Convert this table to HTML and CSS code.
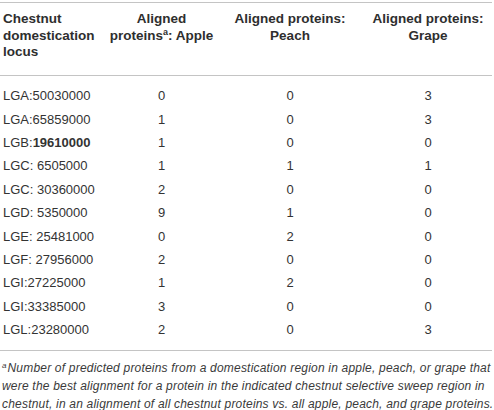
FILE: index.html
```html
<!DOCTYPE html>
<html>
<head>
<meta charset="utf-8">
<link rel="stylesheet" href="styles.css">
</head>
<body>
<div class="wrap">
  <table class="data">
    <colgroup>
      <col class="c1"><col class="c2"><col class="c3"><col class="c4">
    </colgroup>
    <thead>
      <tr>
        <th class="left">Chestnut<br>domestication<br>locus</th>
        <th>Aligned<br>proteins<sup>a</sup>: Apple</th>
        <th>Aligned proteins:<br>Peach</th>
        <th>Aligned proteins:<br>Grape</th>
      </tr>
    </thead>
    <tbody>
      <tr class="first"><td class="left">LGA:50030000</td><td>0</td><td>0</td><td>3</td></tr>
      <tr><td class="left">LGA:65859000</td><td>1</td><td>0</td><td>3</td></tr>
      <tr><td class="left">LGB:<b>19610000</b></td><td>1</td><td>0</td><td>0</td></tr>
      <tr><td class="left">LGC: 6505000</td><td>1</td><td>1</td><td>1</td></tr>
      <tr><td class="left">LGC: 30360000</td><td>2</td><td>0</td><td>0</td></tr>
      <tr><td class="left">LGD: 5350000</td><td>9</td><td>1</td><td>0</td></tr>
      <tr><td class="left">LGE: 25481000</td><td>0</td><td>2</td><td>0</td></tr>
      <tr><td class="left">LGF: 27956000</td><td>2</td><td>0</td><td>0</td></tr>
      <tr><td class="left">LGI:27225000</td><td>1</td><td>2</td><td>0</td></tr>
      <tr><td class="left">LGI:33385000</td><td>3</td><td>0</td><td>0</td></tr>
      <tr class="last"><td class="left">LGL:23280000</td><td>2</td><td>0</td><td>3</td></tr>
    </tbody>
  </table>
  <p class="note"><sup>a</sup>Number of predicted proteins from a domestication region in apple, peach, or grape that were the best alignment for a protein in the indicated chestnut selective sweep region in chestnut, in an alignment of all chestnut proteins vs. all apple, peach, and grape proteins.</p>
</div>
</body>
</html>
```

FILE: styles.css
```css
html, body {
  margin: 0;
  padding: 0;
  background: #ffffff;
}

.wrap {
  width: 492px;
  padding-top: 2px;
  font-family: "Liberation Sans", Arial, Helvetica, sans-serif;
  color: #333333;
}

.data {
  width: 492px;
  border-collapse: collapse;
  table-layout: fixed;
  font-size: 13px;
}

.c1 { width: 107px; }
.c2 { width: 109px; }
.c3 { width: 148px; }
.c4 { width: 128px; }

.data thead tr {
  border-top: 1px solid #c4c4c4;
  border-bottom: 1px solid #c4c4c4;
}

.data th {
  font-size: 13.5px;
  font-weight: bold;
  color: #2e2e2e;
  line-height: 16.7px;
  padding: 8px 0 14px;
  text-align: center;
  vertical-align: top;
}

.data th sup {
  font-size: 9px;
  line-height: 0;
  vertical-align: 5px;
}

.data td {
  padding: 0;
  line-height: 23.4px;
  height: 23.4px;
  text-align: center;
  white-space: nowrap;
}

.data th.left,
.data td.left {
  text-align: left;
  padding-left: 3px;
}

.data tr.first td { padding-top: 8px; }
.data tr.last td { padding-bottom: 8px; }

.data tbody tr.last {
  border-bottom: 1px solid #c4c4c4;
}

.note {
  width: 494px;
  margin: 8px 0 0;
  padding-left: 2px;
  box-sizing: border-box;
  font-size: 12px;
  letter-spacing: 0.2px;
  font-style: italic;
  line-height: 18px;
  color: #3a3a3a;
}

.note sup {
  font-size: 8px;
  line-height: 0;
  letter-spacing: 0;
  vertical-align: 4px;
  margin-right: 1px;
}
```
